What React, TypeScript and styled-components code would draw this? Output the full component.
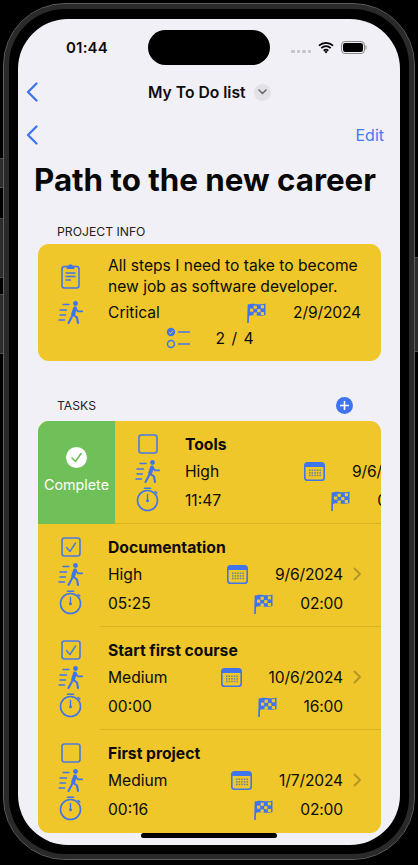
import React from "react";
import styled, { createGlobalStyle } from "styled-components";

const BLUE = "#3f74ee";
const Global = createGlobalStyle`
  html, body { margin: 0; padding: 0; background: #000; }
  * { box-sizing: border-box; }
  #root { width: 418px; height: 865px; overflow: hidden; }
`;

const Page = styled.div`
  position: relative; width: 418px; height: 865px; padding: 3px; background: #000;
  font-family: Inter, "Liberation Sans", sans-serif; color: #0c0c0c;
`;
const SideButton = styled.div<{ $top: number; $height: number; $right?: boolean }>`
  position: absolute; top: ${p => p.$top}px; height: ${p => p.$height}px; width: 3px;
  ${p => (p.$right ? "right: 0;" : "left: 0;")}
  background: #2b2b2b; border-top: 1px solid #4e4e4e; border-bottom: 1px solid #4e4e4e;
`;
const Shell = styled.div`
  width: 412px; height: 857px; border: 1px solid #5e5e5e; border-radius: 62px;
  padding: 15px 14px 14px; background: #000; box-shadow: inset 0 0 0 5px #2a2a2a;
`;
const Screen = styled.div`
  position: relative; width: 382px; height: 826px; border-radius: 50px; overflow: hidden;
  background: #f1f0f7; display: flex; flex-direction: column;
`;
const StatusBar = styled.div`
  height: 56px; flex: none; display: flex; align-items: center; justify-content: space-between;
  padding: 0 33px 0 48px;
`;
const Clock = styled.span`font-size: 15px; font-weight: 600; letter-spacing: 0.2px;`;
const StatusIcons = styled.div`display: flex; align-items: center; gap: 7px;`;
const SignalDots = styled.div`
  display: flex; gap: 2px; margin-top: 8px;
`;
const Dot = styled.i`width: 3.500px; height: 3px; background: #c5c5c9; border-radius: 1px; display: block;`;
const Island = styled.div`
  position: absolute; left: 130px; top: 11px; width: 122px; height: 35px; border-radius: 18px; background: #000;
`;
const HomeBar = styled.div`
  position: absolute; left: 123px; bottom: 7px; width: 136px; height: 5px; border-radius: 3px; background: #000; z-index: 2;
`;
const TopNav = styled.div`
  height: 34px; flex: none; position: relative; display: flex; align-items: center; padding-left: 8px;
`;
const NavTitle = styled.div`
  position: absolute; left: 130px; top: 0; height: 34px; display: flex; align-items: center; gap: 8px;
  font-size: 15.700px; font-weight: 600; white-space: nowrap;
`;
const Disclosure = styled.span`
  width: 17px; height: 17px; border-radius: 50%; background: #e1e1e6; display: flex; align-items: center; justify-content: center;
`;
const SubNav = styled.div`
  height: 52px; flex: none; display: flex; align-items: center; justify-content: space-between;
  padding: 0 16px 0 8px;
`;
const EditLink = styled.span`font-size: 16px; color: #4579f1;`;
const PageTitle = styled.h1`
  margin: 0; padding-left: 16px; height: 38px; line-height: 38px; font-size: 31.300px; font-weight: 700; white-space: nowrap; flex: none;
  color: #080808;
`;
const SectionHead = styled.div<{ $top: number }>`
  margin-top: ${p => p.$top}px; height: 16px; flex: none; display: flex; align-items: center; justify-content: space-between;
  padding: 0 47px 0 39px; font-size: 12.200px; color: #222;
`;
const AddButton = styled.span`
  width: 17px; height: 17px; border-radius: 50%; background: #3f74ee; display: flex; align-items: center; justify-content: center;
`;
const InfoCard = styled.section`
  margin: 5px 19px 0 20px; height: 117px; flex: none; background: #efc72a; border-radius: 11px;
  padding: 11px 20px 0 0; font-size: 15.600px;
`;
const InfoRow = styled.div`display: flex; align-items: center;`;
const IconCell = styled.div`
  width: 65px; margin-right: 5px; flex: none; display: flex; justify-content: center; align-items: center;
`;
const Description = styled.p`margin: 0; line-height: 21px; white-space: nowrap;`;
const MetaRow = styled(InfoRow)`height: 26px; margin-top: 2px;`;
const EndGroup = styled.div`margin-left: auto; display: flex; align-items: center; gap: 27px; white-space: nowrap; letter-spacing: -0.150px;`;
const ProgressRow = styled.div`
  height: 26px; display: flex; align-items: center; justify-content: center; gap: 25px; margin-left: 20px;
`;
const ProgressText = styled.span`word-spacing: 2px;`;
const TaskCard = styled.section`
  margin: 8px 19px 0 20px; width: 343px; height: 412px; flex: none; background: #efc72a; border-radius: 11px; overflow: hidden;
`;
const TaskRow = styled.div`display: flex; height: 103px;`;
const SwipeAction = styled.div`
  width: 77px; flex: none; background: #6fc058; color: #fff; display: flex; flex-direction: column; align-items: center;
  padding-top: 26px; gap: 8px; font-size: 14.300px; line-height: 18px;
`;
const TaskBody = styled.div`width: 343px; flex: none; display: flex; flex-direction: column;`;
const TaskGrid = styled.div`
  flex: 1; padding-top: 12px; display: grid; grid-template-columns: 70px 1fr 38px;
  grid-template-rows: 22px 32px 26px; align-items: center; font-size: 15.600px; white-space: nowrap;
`;
const TaskTitle = styled.div`font-size: 15.700px; font-weight: 700; grid-column: 2 / 4;`;
const ChevronCell = styled.div`display: flex; padding-left: 10px; align-items: center;`;
const Separator = styled.div<{ $inset: number }>`
  height: 1px; flex: none; margin-left: ${p => p.$inset}px; background: rgba(120, 90, 0, 0.18);
`;

const Back = () => (
  <svg width="12" height="20" viewBox="0 0 12 20" fill="none"><path d="M10.500 1.500 2 10l8.500 8.500" stroke="#3f74ee" strokeWidth="2.300" strokeLinecap="round" strokeLinejoin="round" /></svg>
);
const Runner = () => (
  <svg width="25" height="23" viewBox="0 0 25 23" fill="none" stroke={BLUE} strokeLinecap="round">
    <circle cx="17.500" cy="2.500" r="2.400" fill={BLUE} stroke="none" />
    <path d="M17 7.500 15.200 13" strokeWidth="4" />
    <path d="M15 13.500 10.500 22M15.500 14 19 16.500 20 22" strokeWidth="2.100" strokeLinejoin="round" />
    <path d="M17.500 7.500 20 10.300H24.200" strokeWidth="1.800" strokeLinejoin="round" />
    <path d="M5 3.500H11M2 9H8.500M2 14H7.500M1 19H6.500" strokeWidth="1.400" />
  </svg>
);
const Timer = () => (
  <svg width="23" height="26" viewBox="0 0 23 26" fill="none" stroke={BLUE} strokeLinecap="round">
    <circle cx="11.500" cy="13.500" r="10" strokeWidth="1.600" />
    <path d="M8.500 1.300H14.500" strokeWidth="1.600" />
    <path d="M19.200 4.500 20.800 6" strokeWidth="1.600" />
    <path d="M11.500 7.500V13.500" strokeWidth="1.400" />
    <circle cx="11.500" cy="13.800" r="1.500" fill={BLUE} stroke="none" />
  </svg>
);
const checkers = [0, 1, 2, 3].flatMap(c => [0, 1, 2].filter(r => (c + r) % 2 === 1).map(r => ({ c, r })));
const Flag = () => (
  <svg width="19" height="21" viewBox="0 0 19 21">
    <path d="M1.500 3 1 20.500" stroke={BLUE} strokeWidth="1.700" strokeLinecap="round" />
    <path d="M1.500 3C6 0 10 4 18.500 1.500V13C11 15.500 6 11.500 1.500 14.500Z" fill={BLUE} />
    <g fill="#efc72a">
      {checkers.map(({ c, r }) => (
        <rect key={`${c}-${r}`} x={3 + c * 3.600} y={3.200 + r * 3.400 + (c === 1 || c === 2 ? 0.500 : 0)} width="3.200" height="3.100" />
      ))}
    </g>
  </svg>
);
const Calendar = () => (
  <svg width="21" height="19" viewBox="0 0 21 19">
    <rect x="0.800" y="0.800" width="19.400" height="17.400" rx="2.800" fill="none" stroke={BLUE} strokeWidth="1.600" />
    <path d="M1 5V3.500A2.500 2.500 0 0 1 3.500 1H17.500A2.500 2.500 0 0 1 20 3.500V5Z" fill={BLUE} />
    <g fill="#6b7f9a">
      {[0, 1, 2, 3, 4].flatMap(c => [0, 1, 2].map(r => (
        <rect key={`${c}-${r}`} x={5 + c * 2.600} y={7.500 + r * 2.600} width="1.500" height="1.500" />
      )))}
    </g>
  </svg>
);
const Checkbox = ({ checked }: { checked: boolean }) => (
  <svg width="20" height="20" viewBox="0 0 20 20" fill="none">
    <rect x="1" y="1" width="18" height="18" rx="2.500" stroke="#4a78e6" strokeWidth="1.600" />
    {checked && <path d="M5.500 10.500 9 14.500 14.500 6" stroke="#4a78e6" strokeWidth="1.400" strokeLinecap="round" strokeLinejoin="round" />}
  </svg>
);
const Clipboard = () => (
  <svg width="19" height="26" viewBox="0 0 19 26" fill="none" stroke={BLUE}>
    <rect x="1" y="3.500" width="17" height="21.500" rx="2.500" strokeWidth="1.500" />
    <path d="M6 4.500V3.200H8A1.500 1.500 0 0 1 11 3.200H13V5.500H6Z" fill={BLUE} strokeWidth="1" />
    <path d="M4.500 10H14.500M4.500 13.500H14.500M4.500 17H10" strokeWidth="1.300" />
  </svg>
);
const Checklist = () => (
  <svg width="25" height="22" viewBox="0 0 25 22" fill="none">
    <circle cx="5" cy="5" r="4.200" fill={BLUE} />
    <path d="M3 5.200 4.500 6.800 7 3.500" stroke="#efc72a" strokeWidth="1" />
    <circle cx="5" cy="17" r="3.500" stroke={BLUE} strokeWidth="1.500" />
    <path d="M12 5H24M12 17H24" stroke="#4a78e6" strokeWidth="1.600" />
  </svg>
);
const Chevron = () => (
  <svg width="9" height="14" viewBox="0 0 9 14" fill="none"><path d="M1.500 1.500 7 7l-5.500 5.500" stroke="#b0962a" strokeWidth="1.800" strokeLinecap="round" strokeLinejoin="round" /></svg>
);

type Task = { title: string; done: boolean; priority: string; date: string; spent: string; est: string; swiped?: boolean; inset: number };
const tasks: Task[] = [
  { title: "Tools", done: false, priority: "High", date: "9/6/2024", spent: "11:47", est: "02:00", swiped: true, inset: 0 },
  { title: "Documentation", done: true, priority: "High", date: "9/6/2024", spent: "05:25", est: "02:00", inset: 62 },
  { title: "Start first course", done: true, priority: "Medium", date: "10/6/2024", spent: "00:00", est: "16:00", inset: 62 },
  { title: "First project", done: false, priority: "Medium", date: "1/7/2024", spent: "00:16", est: "02:00", inset: 343 },
];

const TaskItem = ({ task }: { task: Task }) => (
  <TaskRow>
    {task.swiped && (
      <SwipeAction>
        <svg width="21" height="21" viewBox="0 0 21 21"><circle cx="10.500" cy="10.500" r="10.500" fill="#fff" /><path d="M6 11 9.500 14.500 15 6.500" fill="none" stroke="#6fc058" strokeWidth="1.600" strokeLinecap="round" strokeLinejoin="round" /></svg>
        Complete
      </SwipeAction>
    )}
    <TaskBody>
      <TaskGrid>
        <IconCell><Checkbox checked={task.done} /></IconCell>
        <TaskTitle>{task.title}</TaskTitle>
        <IconCell><Runner /></IconCell>
        <InfoRow>{task.priority}<EndGroup><Calendar />{task.date}</EndGroup></InfoRow>
        <ChevronCell><Chevron /></ChevronCell>
        <IconCell><Timer /></IconCell>
        <InfoRow>{task.spent}<EndGroup><Flag />{task.est}</EndGroup></InfoRow>
      </TaskGrid>
      <Separator $inset={task.inset} />
    </TaskBody>
  </TaskRow>
);

export default function App() {
  return (
    <Page>
      <Global />
      <SideButton $top={158} $height={30} />
      <SideButton $top={218} $height={60} />
      <SideButton $top={294} $height={60} />
      <SideButton $top={257} $height={95} $right />
      <Shell>
        <Screen>
          <StatusBar>
            <Clock>01:44</Clock>
            <StatusIcons>
              <SignalDots><Dot /><Dot /><Dot /><Dot /></SignalDots>
              <svg width="16" height="13" viewBox="0 0 17 13"><path d="M1 4.500C5.500 .5 11.500 .5 16 4.500M3.500 7.200C6.500 4.500 10.500 4.500 13.500 7.200M6 9.800C7.500 8.500 9.500 8.500 11 9.800" fill="none" stroke="#000" strokeWidth="1.900" /><path d="M8.500 13 6.700 10.800C7.700 10 9.300 10 10.300 10.800Z" fill="#000" /></svg>
              <svg width="26" height="13" viewBox="0 0 26 13"><rect x=".5" y=".5" width="23" height="12" rx="3.500" fill="none" stroke="#888" /><rect x="2" y="2" width="20" height="9" rx="2.200" fill="#000" /><rect x="24.500" y="4.500" width="1" height="4" fill="#888" /></svg>
            </StatusIcons>
          </StatusBar>
          <Island />
          <TopNav>
            <Back />
            <NavTitle>
              My To Do list
              <Disclosure><svg width="9" height="6" viewBox="0 0 9 6"><path d="M1 1 4.500 4.500 8 1" fill="none" stroke="#65656b" strokeWidth="1.500" strokeLinecap="round" /></svg></Disclosure>
            </NavTitle>
          </TopNav>
          <SubNav><Back /><EditLink>Edit</EditLink></SubNav>
          <PageTitle>Path to the new career</PageTitle>
          <SectionHead $top={24}>PROJECT INFO</SectionHead>
          <InfoCard>
            <InfoRow>
              <IconCell><Clipboard /></IconCell>
              <Description>All steps I need to take to become<br />new job as software developer.</Description>
            </InfoRow>
            <MetaRow>
              <IconCell><Runner /></IconCell>
              Critical
              <EndGroup><Flag />2/9/2024</EndGroup>
            </MetaRow>
            <ProgressRow><Checklist /><ProgressText>2 / 4</ProgressText></ProgressRow>
          </InfoCard>
          <SectionHead $top={36}>
            TASKS
            <AddButton><svg width="9" height="9" viewBox="0 0 9 9"><path d="M4.500 .5V8.500M.5 4.500H8.500" stroke="#fff" strokeWidth="1.600" strokeLinecap="round" /></svg></AddButton>
          </SectionHead>
          <TaskCard>
            {tasks.map(t => <TaskItem key={t.title} task={t} />)}
          </TaskCard>
          <HomeBar />
        </Screen>
      </Shell>
    </Page>
  );
}
